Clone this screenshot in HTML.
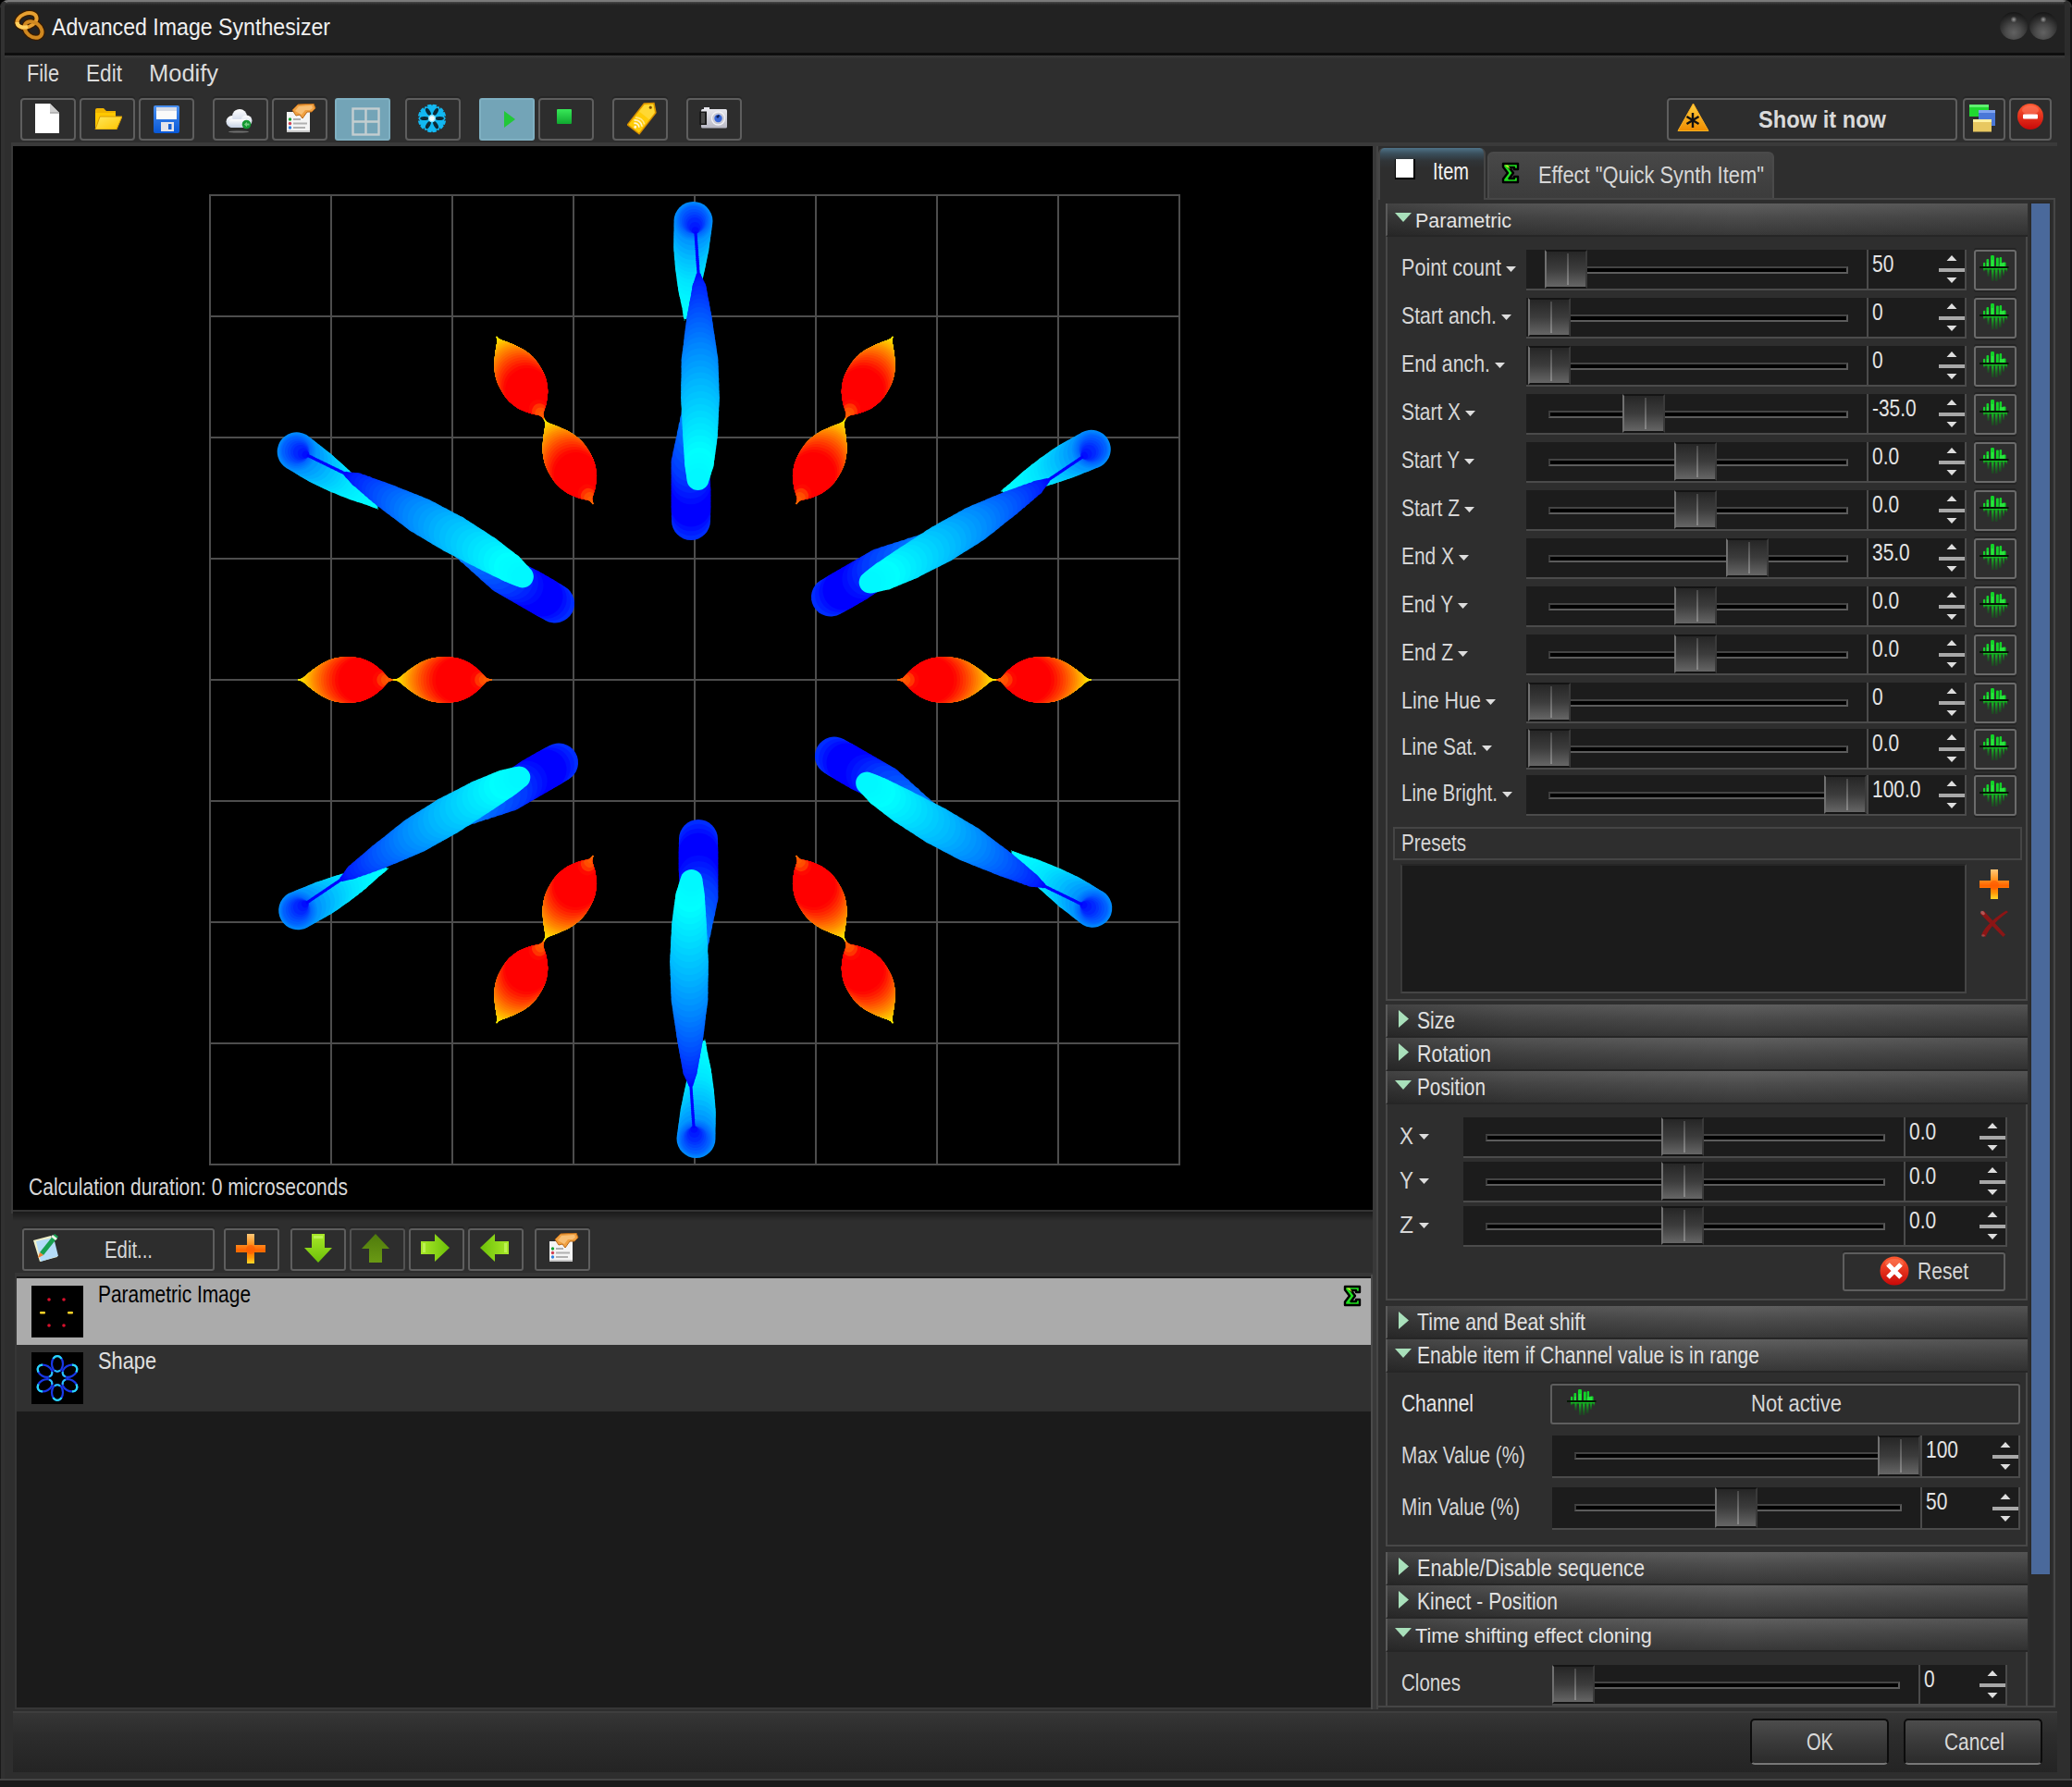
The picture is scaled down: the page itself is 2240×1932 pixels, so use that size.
<!DOCTYPE html>
<html><head><meta charset="utf-8"><title>Advanced Image Synthesizer</title>
<style>
*{box-sizing:border-box;margin:0;padding:0}
html,body{width:2240px;height:1932px;overflow:hidden;background:#000}
body{position:relative;font-family:"Liberation Sans",sans-serif}
div,span.t,svg{position:absolute}
span.t{white-space:nowrap;line-height:1;transform-origin:0 0;display:block}
.tb{border:2px solid #5e5e5e;border-radius:4px;background:#2d2d2d;box-shadow:0 -2px 0 #262626}
.tbh{border:2px solid #7fb0c2;border-radius:3px;background:#73a4b7}
.hd{background:linear-gradient(to right,rgba(0,0,0,.3),rgba(0,0,0,.12) 20%,rgba(0,0,0,0) 55%,rgba(0,0,0,.12)),linear-gradient(#5f5f5f,#4b4b4b 45%,#383838);border-left:2px solid #5a5a5a;border-bottom:2px solid #262626}
.sl{background:#1c1c1c;border-bottom:2px solid #4b4b4b}
.th{background:linear-gradient(#262626,#3c3c3c 50%,#666);border-left:2px solid #707070;border-top:2px solid #141414;border-bottom:2px solid #141414;border-right:2px solid #3a3a3a}
.th:after{content:"";position:absolute;left:22px;top:2px;bottom:2px;width:2px;background:linear-gradient(#4a4a4a,#8a8a8a)}
.gr{background:#000;border-top:2px solid #444;border-bottom:2px solid #5c5c5c;border-right:2px solid #5a5a5a;border-left:2px solid #3a3a3a}
.vb{background:#1c1c1c;border-left:2px solid #4b4b4b;border-right:2px solid #4b4b4b;border-bottom:2px solid #4b4b4b}
.cb{border:2px solid #6b6b6b;border-radius:3px;background:#2e2e2e;box-shadow:0 -2px 0 #242424,0 2px 0 #242424}
.btn{border:2px solid #5e5e5e;border-radius:3px;background:#2d2d2d;box-shadow:0 -2px 0 #262626}
</style></head><body>
<div style="left:0px;top:0px;width:2240px;height:1932px;background:#000"></div>
<div style="left:0px;top:0px;width:2240px;height:1932px;background:#313131;border-radius:8px 8px 0 0"></div>
<div style="left:1px;top:0px;width:2237px;height:60px;background:linear-gradient(#484848,#262626 3px,#222 5px);border-radius:8px 8px 0 0;border-top:2px solid #7a7a7a;border-left:4px solid #323232;border-right:6px solid #2c2c2c"></div>
<div style="left:5px;top:57px;width:2227px;height:3px;background:#0e0e0e"></div>
<div style="left:5px;top:60px;width:2233px;height:1864px;background:#2e2e2e"></div>
<div style="left:5px;top:60px;width:2227px;height:4px;background:linear-gradient(#3a3a3a,#2e2e2e)"></div>
<div style="left:0px;top:8px;width:1px;height:1924px;background:#1a1a1a"></div>
<div style="left:2238px;top:8px;width:2px;height:1924px;background:#171717"></div>
<div style="left:0px;top:1923px;width:2240px;height:2px;background:#444"></div>
<div style="left:0px;top:1925px;width:2240px;height:7px;background:#1a1a1a"></div>
<span class="t" style="left:56.0px;top:17.0px;font-size:25.44px;color:#f0f0f0;transform:scaleX(0.9098);">Advanced Image Synthesizer</span>
<div style="left:2162px;top:13px;width:30px;height:30px;border-radius:50%;background:radial-gradient(circle at 50% 27%,#9a9a9a 0,rgba(110,110,110,0) 13%),radial-gradient(circle at 50% 74%,#626262 0,#4c4c4c 30%,#2c2c2c 60%,#181818 80%,#222 100%)"></div>
<div style="left:2194px;top:13px;width:30px;height:30px;border-radius:50%;background:radial-gradient(circle at 50% 27%,#9a9a9a 0,rgba(110,110,110,0) 13%),radial-gradient(circle at 50% 74%,#626262 0,#4c4c4c 30%,#2c2c2c 60%,#181818 80%,#222 100%)"></div>
<span class="t" style="left:29.0px;top:66.5px;font-size:25.44px;color:#dcdcdc;transform:scaleX(0.8539);">File</span>
<span class="t" style="left:93.0px;top:66.5px;font-size:25.44px;color:#dcdcdc;transform:scaleX(0.8898);">Edit</span>
<span class="t" style="left:161.0px;top:66.5px;font-size:25.44px;color:#dcdcdc;transform:scaleX(1.0011);">Modify</span>
<div class="tb" style="left:22px;top:106px;width:60px;height:46px;"></div>
<div class="tb" style="left:86px;top:106px;width:60px;height:46px;"></div>
<div class="tb" style="left:150px;top:106px;width:60px;height:46px;"></div>
<div class="tb" style="left:230px;top:106px;width:60px;height:46px;"></div>
<div class="tb" style="left:294px;top:106px;width:60px;height:46px;"></div>
<div class="tbh" style="left:362px;top:106px;width:60px;height:46px;"></div>
<div class="tb" style="left:438px;top:106px;width:60px;height:46px;"></div>
<div class="tbh" style="left:518px;top:106px;width:60px;height:46px;"></div>
<div class="tb" style="left:582px;top:106px;width:60px;height:46px;"></div>
<div class="tb" style="left:662px;top:106px;width:60px;height:46px;"></div>
<div class="tb" style="left:742px;top:106px;width:60px;height:46px;"></div>
<div class="tb" style="left:1802px;top:106px;width:314px;height:46px;"></div>
<div class="tb" style="left:2122px;top:106px;width:46px;height:46px;"></div>
<div class="tb" style="left:2172px;top:106px;width:46px;height:46px;"></div>
<span class="t" style="left:1901.0px;top:116.5px;font-size:25.44px;color:#dadada;transform:scaleX(0.9302);font-weight:bold;">Show it now</span>
<div style="left:12px;top:154px;width:2212px;height:4px;background:#3a3a3a"></div>
<div style="left:12px;top:154px;width:1476px;height:1158px;background:#3a3a3a"></div>
<div style="left:14px;top:158px;width:1472px;height:1150px;background:#000"></div>
<div style="left:14px;top:1308px;width:1472px;height:2px;background:#343434"></div>
<div style="left:14px;top:1310px;width:1472px;height:10px;background:linear-gradient(#1a1a1a,#2e2e2e)"></div>
<span class="t" style="left:31.0px;top:1271.0px;font-size:25.44px;color:#d8d8d8;transform:scaleX(0.8272);">Calculation duration: 0 microseconds</span>
<svg width="1472" height="1150" viewBox="14 158 1472 1150" style="left:14px;top:158px"><g fill="#4d4d4d"><rect x="226" y="210" width="2" height="1050"/><rect x="226" y="210" width="1050" height="2"/><rect x="357" y="210" width="2" height="1050"/><rect x="226" y="341" width="1050" height="2"/><rect x="488" y="210" width="2" height="1050"/><rect x="226" y="472" width="1050" height="2"/><rect x="619" y="210" width="2" height="1050"/><rect x="226" y="603" width="1050" height="2"/><rect x="750" y="210" width="2" height="1050"/><rect x="226" y="734" width="1050" height="2"/><rect x="881" y="210" width="2" height="1050"/><rect x="226" y="865" width="1050" height="2"/><rect x="1012" y="210" width="2" height="1050"/><rect x="226" y="996" width="1050" height="2"/><rect x="1143" y="210" width="2" height="1050"/><rect x="226" y="1127" width="1050" height="2"/><rect x="1274" y="210" width="2" height="1050"/><rect x="226" y="1258" width="1050" height="2"/></g><defs><g id="arm"><circle cx="747.0" cy="563.0" r="21.0" fill="rgb(0,45,255)"/><circle cx="747.0" cy="558.0" r="21.2" fill="rgb(0,30,255)"/><circle cx="747.0" cy="553.0" r="21.3" fill="rgb(0,15,255)"/><circle cx="747.0" cy="548.0" r="21.5" fill="rgb(0,0,255)"/><circle cx="747.0" cy="542.0" r="21.5" fill="rgb(0,0,255)"/><circle cx="747.0" cy="536.0" r="21.5" fill="rgb(0,0,255)"/><circle cx="747.0" cy="530.0" r="21.5" fill="rgb(0,0,255)"/><circle cx="746.8" cy="524.0" r="21.3" fill="rgb(0,12,255)"/><circle cx="746.6" cy="518.0" r="21.1" fill="rgb(0,24,255)"/><circle cx="746.4" cy="512.0" r="20.9" fill="rgb(0,36,255)"/><circle cx="746.2" cy="506.0" r="20.7" fill="rgb(0,48,255)"/><circle cx="746.0" cy="500.0" r="20.5" fill="rgb(0,60,255)"/><circle cx="746.5" cy="492.5" r="19.4" fill="rgb(0,70,255)"/><circle cx="747.0" cy="485.0" r="18.4" fill="rgb(0,80,255)"/><circle cx="747.5" cy="477.5" r="17.3" fill="rgb(0,90,255)"/><circle cx="748.0" cy="470.0" r="16.2" fill="rgb(0,100,255)"/><circle cx="748.5" cy="462.5" r="15.2" fill="rgb(0,110,255)"/><circle cx="749.0" cy="455.0" r="14.1" fill="rgb(0,120,255)"/><circle cx="749.5" cy="447.5" r="13.1" fill="rgb(0,130,255)"/><circle cx="750.0" cy="440.0" r="12.0" fill="rgb(0,140,255)"/><circle cx="750.3" cy="431.7" r="10.8" fill="rgb(0,153,255)"/><circle cx="750.7" cy="423.3" r="9.7" fill="rgb(0,167,255)"/><circle cx="751.0" cy="415.0" r="8.5" fill="rgb(0,180,255)"/><circle cx="751.3" cy="406.7" r="7.3" fill="rgb(0,193,255)"/><circle cx="751.7" cy="398.3" r="6.2" fill="rgb(0,207,255)"/><circle cx="752.0" cy="390.0" r="5.0" fill="rgb(0,220,255)"/><circle cx="751.2" cy="383.0" r="4.2" fill="rgb(0,226,255)"/><circle cx="750.5" cy="376.0" r="3.5" fill="rgb(0,232,255)"/><circle cx="749.8" cy="369.0" r="2.8" fill="rgb(0,239,255)"/><circle cx="749.0" cy="362.0" r="2.0" fill="rgb(0,245,255)"/><circle cx="746.0" cy="356.7" r="1.5" fill="rgb(0,248,255)"/><circle cx="743.0" cy="351.3" r="1.1" fill="rgb(0,252,255)"/><circle cx="740.0" cy="346.0" r="0.6" fill="rgb(0,255,255)"/><circle cx="740.7" cy="343.6" r="1.7" fill="rgb(0,254,255)"/><circle cx="741.4" cy="341.2" r="2.8" fill="rgb(0,254,255)"/><circle cx="742.1" cy="338.8" r="3.8" fill="rgb(0,253,255)"/><circle cx="742.8" cy="336.4" r="4.9" fill="rgb(0,253,255)"/><circle cx="743.5" cy="334.0" r="6.0" fill="rgb(0,252,255)"/><circle cx="743.8" cy="329.6" r="7.2" fill="rgb(0,250,255)"/><circle cx="744.1" cy="325.2" r="8.4" fill="rgb(0,249,255)"/><circle cx="744.4" cy="320.8" r="9.6" fill="rgb(0,247,255)"/><circle cx="744.7" cy="316.4" r="10.8" fill="rgb(0,246,255)"/><circle cx="745.0" cy="312.0" r="12.0" fill="rgb(0,244,255)"/><circle cx="745.2" cy="306.5" r="13.0" fill="rgb(0,240,255)"/><circle cx="745.5" cy="301.0" r="14.0" fill="rgb(0,236,255)"/><circle cx="745.8" cy="295.5" r="15.0" fill="rgb(0,232,255)"/><circle cx="746.0" cy="290.0" r="16.0" fill="rgb(0,228,255)"/><circle cx="746.3" cy="285.4" r="16.7" fill="rgb(0,221,255)"/><circle cx="746.6" cy="280.8" r="17.3" fill="rgb(0,215,255)"/><circle cx="746.8" cy="276.2" r="18.0" fill="rgb(0,208,255)"/><circle cx="747.1" cy="271.6" r="18.6" fill="rgb(0,202,255)"/><circle cx="747.4" cy="267.0" r="19.3" fill="rgb(0,195,255)"/><circle cx="747.8" cy="261.4" r="19.6" fill="rgb(0,184,255)"/><circle cx="748.2" cy="255.8" r="20.0" fill="rgb(0,173,255)"/><circle cx="748.7" cy="250.2" r="20.3" fill="rgb(0,162,255)"/><circle cx="749.1" cy="244.6" r="20.7" fill="rgb(0,151,255)"/><circle cx="749.5" cy="239.0" r="21.0" fill="rgb(0,140,255)"/><circle cx="749.6" cy="238.8" r="19.5" fill="rgb(0,129,255)"/><circle cx="749.8" cy="238.5" r="18.0" fill="rgb(0,118,255)"/><circle cx="749.9" cy="238.2" r="16.5" fill="rgb(0,106,255)"/><circle cx="750.0" cy="238.0" r="15.0" fill="rgb(0,95,255)"/><circle cx="750.2" cy="239.2" r="13.2" fill="rgb(0,81,255)"/><circle cx="750.5" cy="240.5" r="11.5" fill="rgb(0,68,255)"/><circle cx="750.8" cy="241.8" r="9.8" fill="rgb(0,54,255)"/><circle cx="751.0" cy="243.0" r="8.0" fill="rgb(0,40,255)"/><circle cx="751.3" cy="246.0" r="5.9" fill="rgb(0,27,255)"/><circle cx="751.7" cy="249.0" r="3.8" fill="rgb(0,13,255)"/><circle cx="752.0" cy="252.0" r="1.7" fill="rgb(0,0,255)"/><circle cx="752.1" cy="254.0" r="1.7" fill="rgb(0,0,255)"/><circle cx="752.3" cy="255.9" r="1.7" fill="rgb(0,0,255)"/><circle cx="752.4" cy="257.9" r="1.7" fill="rgb(0,0,255)"/><circle cx="752.5" cy="259.8" r="1.7" fill="rgb(0,0,255)"/><circle cx="752.7" cy="261.8" r="1.7" fill="rgb(0,0,255)"/><circle cx="752.8" cy="263.7" r="1.7" fill="rgb(0,0,255)"/><circle cx="753.0" cy="265.7" r="1.7" fill="rgb(0,0,255)"/><circle cx="753.1" cy="267.6" r="1.7" fill="rgb(0,0,255)"/><circle cx="753.2" cy="269.6" r="1.7" fill="rgb(0,0,255)"/><circle cx="753.4" cy="271.5" r="1.7" fill="rgb(0,0,255)"/><circle cx="753.5" cy="273.5" r="1.7" fill="rgb(0,0,255)"/><circle cx="753.6" cy="275.5" r="1.7" fill="rgb(0,0,255)"/><circle cx="753.8" cy="277.4" r="1.7" fill="rgb(0,0,255)"/><circle cx="753.9" cy="279.4" r="1.7" fill="rgb(0,0,255)"/><circle cx="754.0" cy="281.3" r="1.7" fill="rgb(0,0,255)"/><circle cx="754.2" cy="283.3" r="1.7" fill="rgb(0,0,255)"/><circle cx="754.3" cy="285.2" r="1.7" fill="rgb(0,0,255)"/><circle cx="754.5" cy="287.2" r="1.7" fill="rgb(0,0,255)"/><circle cx="754.6" cy="289.1" r="1.7" fill="rgb(0,0,255)"/><circle cx="754.7" cy="291.1" r="1.7" fill="rgb(0,0,255)"/><circle cx="754.9" cy="293.0" r="1.7" fill="rgb(0,0,255)"/><circle cx="755.0" cy="295.0" r="1.7" fill="rgb(0,0,255)"/><circle cx="755.2" cy="297.8" r="2.8" fill="rgb(0,6,255)"/><circle cx="755.3" cy="300.7" r="3.8" fill="rgb(0,11,255)"/><circle cx="755.5" cy="303.5" r="4.8" fill="rgb(0,17,255)"/><circle cx="755.7" cy="306.3" r="5.9" fill="rgb(0,23,255)"/><circle cx="755.8" cy="309.2" r="7.0" fill="rgb(0,28,255)"/><circle cx="756.0" cy="312.0" r="8.0" fill="rgb(0,34,255)"/><circle cx="756.0" cy="317.7" r="9.0" fill="rgb(0,42,255)"/><circle cx="756.0" cy="323.3" r="10.0" fill="rgb(0,49,255)"/><circle cx="756.0" cy="329.0" r="11.0" fill="rgb(0,57,255)"/><circle cx="756.0" cy="334.7" r="12.0" fill="rgb(0,65,255)"/><circle cx="756.0" cy="340.3" r="13.0" fill="rgb(0,72,255)"/><circle cx="756.0" cy="346.0" r="14.0" fill="rgb(0,80,255)"/><circle cx="756.1" cy="352.3" r="14.9" fill="rgb(0,88,255)"/><circle cx="756.1" cy="358.6" r="15.7" fill="rgb(0,96,255)"/><circle cx="756.2" cy="364.9" r="16.6" fill="rgb(0,104,255)"/><circle cx="756.3" cy="371.1" r="17.4" fill="rgb(0,111,255)"/><circle cx="756.4" cy="377.4" r="18.3" fill="rgb(0,119,255)"/><circle cx="756.4" cy="383.7" r="19.1" fill="rgb(0,127,255)"/><circle cx="756.5" cy="390.0" r="20.0" fill="rgb(0,135,255)"/><circle cx="756.6" cy="396.7" r="20.2" fill="rgb(0,143,255)"/><circle cx="756.7" cy="403.3" r="20.3" fill="rgb(0,151,255)"/><circle cx="756.8" cy="410.0" r="20.5" fill="rgb(0,158,255)"/><circle cx="756.8" cy="416.7" r="20.7" fill="rgb(0,166,255)"/><circle cx="756.9" cy="423.3" r="20.8" fill="rgb(0,174,255)"/><circle cx="757.0" cy="430.0" r="21.0" fill="rgb(0,182,255)"/><circle cx="757.0" cy="436.7" r="20.7" fill="rgb(0,189,255)"/><circle cx="757.0" cy="443.3" r="20.3" fill="rgb(0,196,255)"/><circle cx="757.0" cy="450.0" r="20.0" fill="rgb(0,203,255)"/><circle cx="757.0" cy="456.7" r="19.7" fill="rgb(0,210,255)"/><circle cx="757.0" cy="463.3" r="19.3" fill="rgb(0,217,255)"/><circle cx="757.0" cy="470.0" r="19.0" fill="rgb(0,224,255)"/><circle cx="756.8" cy="476.0" r="18.4" fill="rgb(0,230,255)"/><circle cx="756.6" cy="482.0" r="17.8" fill="rgb(0,236,255)"/><circle cx="756.4" cy="488.0" r="17.2" fill="rgb(0,243,255)"/><circle cx="756.2" cy="494.0" r="16.6" fill="rgb(0,249,255)"/><circle cx="756.0" cy="500.0" r="16.0" fill="rgb(0,255,255)"/><circle cx="755.6" cy="504.5" r="15.0" fill="rgb(0,253,255)"/><circle cx="755.2" cy="509.0" r="14.0" fill="rgb(0,252,255)"/><circle cx="754.9" cy="513.5" r="13.0" fill="rgb(0,250,255)"/><circle cx="754.5" cy="518.0" r="12.0" fill="rgb(0,248,255)"/></g><clipPath id="lc"><path d="M1076.0 734.3L1079.1 734.1L1082.2 732.8L1089.1 725.2L1094.7 720.5L1100.4 716.5L1106.2 713.8L1111.8 711.8L1117.6 710.7L1123.2 710.2L1129.0 710.2L1134.6 710.7L1140.5 711.8L1145.9 713.6L1151.9 716.2L1157.2 719.4L1163.4 723.8L1168.7 728.0L1174.3 732.7L1176.9 734.1L1180.0 734.3L1180.0 735.7L1176.9 735.9L1174.3 737.3L1168.7 742.0L1163.4 746.2L1157.2 750.6L1151.9 753.8L1145.9 756.4L1140.5 758.2L1134.6 759.3L1129.0 759.8L1123.2 759.8L1117.6 759.3L1111.8 758.2L1106.2 756.2L1100.4 753.5L1094.7 749.5L1089.1 744.8L1082.2 737.2L1079.1 735.9L1076.0 735.7ZM970.0 734.3L973.2 734.1L976.4 732.8L983.4 725.2L989.1 720.5L994.9 716.5L1000.7 713.8L1006.5 711.8L1012.4 710.7L1018.1 710.2L1024.1 710.2L1029.7 710.7L1035.7 711.8L1041.2 713.6L1047.4 716.2L1052.8 719.4L1059.0 723.8L1064.4 728.0L1070.2 732.7L1072.8 734.1L1076.0 734.3L1076.0 735.7L1072.8 735.9L1070.2 737.3L1064.4 742.0L1059.0 746.2L1052.8 750.6L1047.4 753.8L1041.2 756.4L1035.7 758.2L1029.7 759.3L1024.1 759.8L1018.1 759.8L1012.4 759.3L1006.5 758.2L1000.7 756.2L994.9 753.5L989.1 749.5L983.4 744.8L976.4 737.2L973.2 735.9L970.0 735.7Z"/></clipPath><g id="leaf" clip-path="url(#lc)"><circle cx="1180.0" cy="735" r="1.2" fill="rgb(255,245,0)"/><circle cx="1177.4" cy="735" r="2.1" fill="rgb(255,241,0)"/><circle cx="1174.8" cy="735" r="4.2" fill="rgb(255,238,0)"/><circle cx="1172.2" cy="735" r="6.3" fill="rgb(255,234,0)"/><circle cx="1169.6" cy="735" r="8.3" fill="rgb(255,230,0)"/><circle cx="1167.0" cy="735" r="10.3" fill="rgb(255,226,0)"/><circle cx="1164.4" cy="735" r="12.3" fill="rgb(255,222,0)"/><circle cx="1161.8" cy="735" r="14.1" fill="rgb(255,219,0)"/><circle cx="1159.2" cy="735" r="15.9" fill="rgb(255,215,0)"/><circle cx="1156.6" cy="735" r="17.5" fill="rgb(255,207,0)"/><circle cx="1154.0" cy="735" r="19.1" fill="rgb(255,199,0)"/><circle cx="1151.4" cy="735" r="20.5" fill="rgb(255,191,0)"/><circle cx="1148.8" cy="735" r="21.8" fill="rgb(255,183,0)"/><circle cx="1146.2" cy="735" r="23.0" fill="rgb(255,175,0)"/><circle cx="1143.6" cy="735" r="24.1" fill="rgb(255,165,0)"/><circle cx="1141.0" cy="735" r="24.9" fill="rgb(255,152,0)"/><circle cx="1138.4" cy="735" r="25.7" fill="rgb(255,140,0)"/><circle cx="1135.8" cy="735" r="26.3" fill="rgb(255,128,0)"/><circle cx="1133.2" cy="735" r="26.7" fill="rgb(255,115,0)"/><circle cx="1130.6" cy="735" r="26.9" fill="rgb(255,101,0)"/><circle cx="1128.0" cy="735" r="27.0" fill="rgb(255,86,0)"/><circle cx="1125.4" cy="735" r="26.9" fill="rgb(255,71,0)"/><circle cx="1122.8" cy="735" r="26.7" fill="rgb(255,56,0)"/><circle cx="1120.2" cy="735" r="26.3" fill="rgb(255,41,0)"/><circle cx="1117.6" cy="735" r="25.7" fill="rgb(255,25,0)"/><circle cx="1115.0" cy="735" r="24.9" fill="rgb(255,9,0)"/><circle cx="1112.4" cy="735" r="24.1" fill="rgb(255,0,0)"/><circle cx="1109.8" cy="735" r="23.0" fill="rgb(255,0,0)"/><circle cx="1107.2" cy="735" r="21.8" fill="rgb(255,0,0)"/><circle cx="1104.6" cy="735" r="20.5" fill="rgb(255,0,0)"/><circle cx="1102.0" cy="735" r="19.1" fill="rgb(255,0,0)"/><circle cx="1099.4" cy="735" r="17.5" fill="rgb(255,0,0)"/><circle cx="1096.8" cy="735" r="15.9" fill="rgb(255,0,0)"/><circle cx="1094.2" cy="735" r="14.1" fill="rgb(255,0,0)"/><circle cx="1091.6" cy="735" r="12.3" fill="rgb(255,0,0)"/><circle cx="1089.0" cy="735" r="10.3" fill="rgb(255,9,0)"/><circle cx="1086.4" cy="735" r="8.3" fill="rgb(255,52,0)"/><circle cx="1083.8" cy="735" r="6.3" fill="rgb(255,78,0)"/><circle cx="1081.2" cy="735" r="4.2" fill="rgb(255,90,0)"/><circle cx="1078.6" cy="735" r="2.1" fill="rgb(255,102,0)"/><circle cx="1076.0" cy="735" r="1.2" fill="rgb(255,115,0)"/><circle cx="1076.0" cy="735" r="1.2" fill="rgb(255,245,0)"/><circle cx="1073.3" cy="735" r="2.1" fill="rgb(255,241,0)"/><circle cx="1070.7" cy="735" r="4.2" fill="rgb(255,238,0)"/><circle cx="1068.0" cy="735" r="6.3" fill="rgb(255,234,0)"/><circle cx="1065.4" cy="735" r="8.3" fill="rgb(255,230,0)"/><circle cx="1062.8" cy="735" r="10.3" fill="rgb(255,226,0)"/><circle cx="1060.1" cy="735" r="12.3" fill="rgb(255,222,0)"/><circle cx="1057.5" cy="735" r="14.1" fill="rgb(255,219,0)"/><circle cx="1054.8" cy="735" r="15.9" fill="rgb(255,215,0)"/><circle cx="1052.2" cy="735" r="17.5" fill="rgb(255,207,0)"/><circle cx="1049.5" cy="735" r="19.1" fill="rgb(255,199,0)"/><circle cx="1046.8" cy="735" r="20.5" fill="rgb(255,191,0)"/><circle cx="1044.2" cy="735" r="21.8" fill="rgb(255,183,0)"/><circle cx="1041.5" cy="735" r="23.0" fill="rgb(255,175,0)"/><circle cx="1038.9" cy="735" r="24.1" fill="rgb(255,165,0)"/><circle cx="1036.2" cy="735" r="24.9" fill="rgb(255,152,0)"/><circle cx="1033.6" cy="735" r="25.7" fill="rgb(255,140,0)"/><circle cx="1031.0" cy="735" r="26.3" fill="rgb(255,128,0)"/><circle cx="1028.3" cy="735" r="26.7" fill="rgb(255,115,0)"/><circle cx="1025.7" cy="735" r="26.9" fill="rgb(255,101,0)"/><circle cx="1023.0" cy="735" r="27.0" fill="rgb(255,86,0)"/><circle cx="1020.4" cy="735" r="26.9" fill="rgb(255,71,0)"/><circle cx="1017.7" cy="735" r="26.7" fill="rgb(255,56,0)"/><circle cx="1015.0" cy="735" r="26.3" fill="rgb(255,41,0)"/><circle cx="1012.4" cy="735" r="25.7" fill="rgb(255,25,0)"/><circle cx="1009.8" cy="735" r="24.9" fill="rgb(255,9,0)"/><circle cx="1007.1" cy="735" r="24.1" fill="rgb(255,0,0)"/><circle cx="1004.5" cy="735" r="23.0" fill="rgb(255,0,0)"/><circle cx="1001.8" cy="735" r="21.8" fill="rgb(255,0,0)"/><circle cx="999.1" cy="735" r="20.5" fill="rgb(255,0,0)"/><circle cx="996.5" cy="735" r="19.1" fill="rgb(255,0,0)"/><circle cx="993.9" cy="735" r="17.5" fill="rgb(255,0,0)"/><circle cx="991.2" cy="735" r="15.9" fill="rgb(255,0,0)"/><circle cx="988.5" cy="735" r="14.1" fill="rgb(255,0,0)"/><circle cx="985.9" cy="735" r="12.3" fill="rgb(255,0,0)"/><circle cx="983.2" cy="735" r="10.3" fill="rgb(255,9,0)"/><circle cx="980.6" cy="735" r="8.3" fill="rgb(255,52,0)"/><circle cx="978.0" cy="735" r="6.3" fill="rgb(255,78,0)"/><circle cx="975.3" cy="735" r="4.2" fill="rgb(255,90,0)"/><circle cx="972.6" cy="735" r="2.1" fill="rgb(255,102,0)"/><circle cx="970.0" cy="735" r="1.2" fill="rgb(255,115,0)"/></g></defs><use href="#leaf" transform="rotate(0 751 735)"/><use href="#leaf" transform="rotate(60 751 735)"/><use href="#leaf" transform="rotate(120 751 735)"/><use href="#leaf" transform="rotate(180 751 735)"/><use href="#leaf" transform="rotate(240 751 735)"/><use href="#leaf" transform="rotate(300 751 735)"/><use href="#arm" transform="rotate(0 751 735)"/><use href="#arm" transform="rotate(60 751 735)"/><use href="#arm" transform="rotate(120 751 735)"/><use href="#arm" transform="rotate(180 751 735)"/><use href="#arm" transform="rotate(240 751 735)"/><use href="#arm" transform="rotate(300 751 735)"/></svg>
<div class="btn" style="left:24px;top:1328px;width:208px;height:46px;"></div>
<div class="btn" style="left:242px;top:1328px;width:60px;height:46px;"></div>
<div class="btn" style="left:314px;top:1328px;width:60px;height:46px;"></div>
<div class="btn" style="left:378px;top:1328px;width:60px;height:46px;opacity:.75"></div>
<div class="btn" style="left:442px;top:1328px;width:60px;height:46px;"></div>
<div class="btn" style="left:506px;top:1328px;width:60px;height:46px;"></div>
<div class="btn" style="left:578px;top:1328px;width:60px;height:46px;"></div>
<span class="t" style="left:113.0px;top:1338.5px;font-size:25.44px;color:#d6d6d6;transform:scaleX(0.7996);">Edit...</span>
<div style="left:16px;top:1376px;width:1468px;height:472px;background:#363636"></div>
<div style="left:1482px;top:1378px;width:2px;height:470px;background:#4a4a4a"></div>
<div style="left:18px;top:1380px;width:1464px;height:466px;background:#1b1b1b"></div>
<div style="left:18px;top:1382px;width:1464px;height:72px;background:#ababab"></div>
<div style="left:18px;top:1454px;width:1464px;height:72px;background:#303030"></div>
<div style="left:34px;top:1390px;width:56px;height:56px;background:#000"></div>
<div style="left:34px;top:1462px;width:56px;height:56px;background:#000"></div>
<span class="t" style="left:106.0px;top:1386.5px;font-size:25.44px;color:#000;transform:scaleX(0.8220);">Parametric Image</span>
<span class="t" style="left:106.0px;top:1458.5px;font-size:25.44px;color:#e0e0e0;transform:scaleX(0.8565);">Shape</span>
<div style="left:1484px;top:158px;width:6px;height:1690px;background:#393939"></div>
<div style="left:1488px;top:158px;width:2px;height:1690px;background:#444"></div>
<div style="left:14px;top:1850px;width:2210px;height:66px;background:linear-gradient(#363636,#2c2c2c 40%,#242424)"></div>
<div style="left:14px;top:1850px;width:2210px;height:2px;background:#3e3e3e"></div>
<div style="left:1892px;top:1858px;width:150px;height:50px;border-radius:5px;background:linear-gradient(#4c4c4c,#3a3a3a 50%,#2b2b2b);border:2px solid #0c0c0c;border-bottom:2px solid #777;box-shadow:0 0 0 0 #000"></div>
<span class="t" style="left:1953.0px;top:1870.5px;font-size:25.44px;color:#dadada;transform:scaleX(0.7891);">OK</span>
<div style="left:2058px;top:1858px;width:150px;height:50px;border-radius:5px;background:linear-gradient(#4c4c4c,#3a3a3a 50%,#2b2b2b);border:2px solid #0c0c0c;border-bottom:2px solid #777;box-shadow:0 0 0 0 #000"></div>
<span class="t" style="left:2102.0px;top:1870.5px;font-size:25.44px;color:#dadada;transform:scaleX(0.8209);">Cancel</span>
<div style="left:1488px;top:214px;width:734px;height:1632px;border:2px solid #464646;background:#2e2e2e"></div>
<div style="left:1490px;top:160px;width:116px;height:56px;background:linear-gradient(#4f7388,#3a4f5c 6px,#303437 14px,#2e2e2e 22px);border-radius:6px 6px 0 0;border-left:2px solid #464646;border-right:2px solid #464646"></div>
<div style="left:1608px;top:164px;width:310px;height:50px;background:linear-gradient(#484848,#3c3c3c);border-radius:6px 6px 0 0;border:2px solid #4a4a4a;border-bottom:none"></div>
<div style="left:1508px;top:172px;width:22px;height:22px;background:#fff;border:2px solid #000;border-top:none;border-left-width:1px"></div>
<span class="t" style="left:1549.0px;top:171.9px;font-size:26.16px;color:#f2f2f2;transform:scaleX(0.7665);">Item</span>
<span class="t" style="left:1663.0px;top:175.9px;font-size:26.16px;color:#d6d6d6;transform:scaleX(0.8372);">Effect "Quick Synth Item"</span>
<div style="left:2194px;top:218px;width:24px;height:1626px;background:#2a2a2a"></div>
<div style="left:2196px;top:220px;width:20px;height:1482px;background:#4a699b"></div>
<div class="hd" style="left:1498px;top:220px;width:694px;height:36px;"></div>
<svg style="left:1508px;top:230px" width="18" height="10"><path d="M0 0H18L9 10Z" fill="#a9e0bb"/></svg>
<span class="t" style="left:1530.0px;top:226.8px;font-size:22.67px;color:#e4e4e4;transform:scaleX(0.9487);">Parametric</span>
<div style="left:1498px;top:256px;width:694px;height:826px;border-left:2px solid #484848;border-right:2px solid #484848;border-bottom:2px solid #484848"></div>
<span class="t" style="left:1515.0px;top:276.5px;font-size:25.44px;color:#d6d6d6;transform:scaleX(0.8486);">Point count</span>
<svg style="left:1628px;top:288px" width="11" height="6"><path d="M0 0H11L5.5 6Z" fill="#ddd"/></svg>
<div class="sl" style="left:1650px;top:270px;width:368px;height:44px;"></div>
<div class="gr" style="left:1674px;top:288px;width:324px;height:8px;"></div>
<div class="th" style="left:1670px;top:270px;width:46px;height:42px;"></div>
<div class="vb" style="left:2018px;top:270px;width:108px;height:44px;"></div>
<span class="t" style="left:2024.0px;top:271.9px;font-size:26.16px;color:#e4e4e4;transform:scaleX(1.0000);transform:scaleX(.8);">50</span>
<svg style="left:2096px;top:270px" width="28" height="42"><path d="M8.5 12h11l-5.5 -6zM8.5 30h11l-5.5 6z" fill="#ddd"/><rect x="0" y="20" width="28" height="4" fill="#a8a8a8"/></svg>
<div class="cb" style="left:2134px;top:270px;width:46px;height:44px;"></div>
<span class="t" style="left:1515.0px;top:328.5px;font-size:25.44px;color:#d6d6d6;transform:scaleX(0.8373);">Start anch.</span>
<svg style="left:1623px;top:340px" width="11" height="6"><path d="M0 0H11L5.5 6Z" fill="#ddd"/></svg>
<div class="sl" style="left:1650px;top:322px;width:368px;height:44px;"></div>
<div class="gr" style="left:1674px;top:340px;width:324px;height:8px;"></div>
<div class="th" style="left:1652px;top:322px;width:46px;height:42px;"></div>
<div class="vb" style="left:2018px;top:322px;width:108px;height:44px;"></div>
<span class="t" style="left:2024.0px;top:323.9px;font-size:26.16px;color:#e4e4e4;transform:scaleX(1.0000);transform:scaleX(.8);">0</span>
<svg style="left:2096px;top:322px" width="28" height="42"><path d="M8.5 12h11l-5.5 -6zM8.5 30h11l-5.5 6z" fill="#ddd"/><rect x="0" y="20" width="28" height="4" fill="#a8a8a8"/></svg>
<div class="cb" style="left:2134px;top:322px;width:46px;height:44px;"></div>
<span class="t" style="left:1515.0px;top:380.5px;font-size:25.44px;color:#d6d6d6;transform:scaleX(0.8381);">End anch.</span>
<svg style="left:1616px;top:392px" width="11" height="6"><path d="M0 0H11L5.5 6Z" fill="#ddd"/></svg>
<div class="sl" style="left:1650px;top:374px;width:368px;height:44px;"></div>
<div class="gr" style="left:1674px;top:392px;width:324px;height:8px;"></div>
<div class="th" style="left:1652px;top:374px;width:46px;height:42px;"></div>
<div class="vb" style="left:2018px;top:374px;width:108px;height:44px;"></div>
<span class="t" style="left:2024.0px;top:375.9px;font-size:26.16px;color:#e4e4e4;transform:scaleX(1.0000);transform:scaleX(.8);">0</span>
<svg style="left:2096px;top:374px" width="28" height="42"><path d="M8.5 12h11l-5.5 -6zM8.5 30h11l-5.5 6z" fill="#ddd"/><rect x="0" y="20" width="28" height="4" fill="#a8a8a8"/></svg>
<div class="cb" style="left:2134px;top:374px;width:46px;height:44px;"></div>
<span class="t" style="left:1515.0px;top:432.5px;font-size:25.44px;color:#d6d6d6;transform:scaleX(0.8232);">Start X</span>
<svg style="left:1584px;top:444px" width="11" height="6"><path d="M0 0H11L5.5 6Z" fill="#ddd"/></svg>
<div class="sl" style="left:1650px;top:426px;width:368px;height:44px;"></div>
<div class="gr" style="left:1674px;top:444px;width:324px;height:8px;"></div>
<div class="th" style="left:1754px;top:426px;width:46px;height:42px;"></div>
<div class="vb" style="left:2018px;top:426px;width:108px;height:44px;"></div>
<span class="t" style="left:2024.0px;top:427.9px;font-size:26.16px;color:#e4e4e4;transform:scaleX(1.0000);transform:scaleX(.8);">-35.0</span>
<svg style="left:2096px;top:426px" width="28" height="42"><path d="M8.5 12h11l-5.5 -6zM8.5 30h11l-5.5 6z" fill="#ddd"/><rect x="0" y="20" width="28" height="4" fill="#a8a8a8"/></svg>
<div class="cb" style="left:2134px;top:426px;width:46px;height:44px;"></div>
<span class="t" style="left:1515.0px;top:484.5px;font-size:25.44px;color:#d6d6d6;transform:scaleX(0.8151);">Start Y</span>
<svg style="left:1583px;top:496px" width="11" height="6"><path d="M0 0H11L5.5 6Z" fill="#ddd"/></svg>
<div class="sl" style="left:1650px;top:478px;width:368px;height:44px;"></div>
<div class="gr" style="left:1674px;top:496px;width:324px;height:8px;"></div>
<div class="th" style="left:1810px;top:478px;width:46px;height:42px;"></div>
<div class="vb" style="left:2018px;top:478px;width:108px;height:44px;"></div>
<span class="t" style="left:2024.0px;top:479.9px;font-size:26.16px;color:#e4e4e4;transform:scaleX(1.0000);transform:scaleX(.8);">0.0</span>
<svg style="left:2096px;top:478px" width="28" height="42"><path d="M8.5 12h11l-5.5 -6zM8.5 30h11l-5.5 6z" fill="#ddd"/><rect x="0" y="20" width="28" height="4" fill="#a8a8a8"/></svg>
<div class="cb" style="left:2134px;top:478px;width:46px;height:44px;"></div>
<span class="t" style="left:1515.0px;top:536.5px;font-size:25.44px;color:#d6d6d6;transform:scaleX(0.8255);">Start Z</span>
<svg style="left:1583px;top:548px" width="11" height="6"><path d="M0 0H11L5.5 6Z" fill="#ddd"/></svg>
<div class="sl" style="left:1650px;top:530px;width:368px;height:44px;"></div>
<div class="gr" style="left:1674px;top:548px;width:324px;height:8px;"></div>
<div class="th" style="left:1810px;top:530px;width:46px;height:42px;"></div>
<div class="vb" style="left:2018px;top:530px;width:108px;height:44px;"></div>
<span class="t" style="left:2024.0px;top:531.9px;font-size:26.16px;color:#e4e4e4;transform:scaleX(1.0000);transform:scaleX(.8);">0.0</span>
<svg style="left:2096px;top:530px" width="28" height="42"><path d="M8.5 12h11l-5.5 -6zM8.5 30h11l-5.5 6z" fill="#ddd"/><rect x="0" y="20" width="28" height="4" fill="#a8a8a8"/></svg>
<div class="cb" style="left:2134px;top:530px;width:46px;height:44px;"></div>
<span class="t" style="left:1515.0px;top:588.5px;font-size:25.44px;color:#d6d6d6;transform:scaleX(0.8226);">End X</span>
<svg style="left:1577px;top:600px" width="11" height="6"><path d="M0 0H11L5.5 6Z" fill="#ddd"/></svg>
<div class="sl" style="left:1650px;top:582px;width:368px;height:44px;"></div>
<div class="gr" style="left:1674px;top:600px;width:324px;height:8px;"></div>
<div class="th" style="left:1866px;top:582px;width:46px;height:42px;"></div>
<div class="vb" style="left:2018px;top:582px;width:108px;height:44px;"></div>
<span class="t" style="left:2024.0px;top:583.9px;font-size:26.16px;color:#e4e4e4;transform:scaleX(1.0000);transform:scaleX(.8);">35.0</span>
<svg style="left:2096px;top:582px" width="28" height="42"><path d="M8.5 12h11l-5.5 -6zM8.5 30h11l-5.5 6z" fill="#ddd"/><rect x="0" y="20" width="28" height="4" fill="#a8a8a8"/></svg>
<div class="cb" style="left:2134px;top:582px;width:46px;height:44px;"></div>
<span class="t" style="left:1515.0px;top:640.5px;font-size:25.44px;color:#d6d6d6;transform:scaleX(0.8136);">End Y</span>
<svg style="left:1576px;top:652px" width="11" height="6"><path d="M0 0H11L5.5 6Z" fill="#ddd"/></svg>
<div class="sl" style="left:1650px;top:634px;width:368px;height:44px;"></div>
<div class="gr" style="left:1674px;top:652px;width:324px;height:8px;"></div>
<div class="th" style="left:1810px;top:634px;width:46px;height:42px;"></div>
<div class="vb" style="left:2018px;top:634px;width:108px;height:44px;"></div>
<span class="t" style="left:2024.0px;top:635.9px;font-size:26.16px;color:#e4e4e4;transform:scaleX(1.0000);transform:scaleX(.8);">0.0</span>
<svg style="left:2096px;top:634px" width="28" height="42"><path d="M8.5 12h11l-5.5 -6zM8.5 30h11l-5.5 6z" fill="#ddd"/><rect x="0" y="20" width="28" height="4" fill="#a8a8a8"/></svg>
<div class="cb" style="left:2134px;top:634px;width:46px;height:44px;"></div>
<span class="t" style="left:1515.0px;top:692.5px;font-size:25.44px;color:#d6d6d6;transform:scaleX(0.8252);">End Z</span>
<svg style="left:1576px;top:704px" width="11" height="6"><path d="M0 0H11L5.5 6Z" fill="#ddd"/></svg>
<div class="sl" style="left:1650px;top:686px;width:368px;height:44px;"></div>
<div class="gr" style="left:1674px;top:704px;width:324px;height:8px;"></div>
<div class="th" style="left:1810px;top:686px;width:46px;height:42px;"></div>
<div class="vb" style="left:2018px;top:686px;width:108px;height:44px;"></div>
<span class="t" style="left:2024.0px;top:687.9px;font-size:26.16px;color:#e4e4e4;transform:scaleX(1.0000);transform:scaleX(.8);">0.0</span>
<svg style="left:2096px;top:686px" width="28" height="42"><path d="M8.5 12h11l-5.5 -6zM8.5 30h11l-5.5 6z" fill="#ddd"/><rect x="0" y="20" width="28" height="4" fill="#a8a8a8"/></svg>
<div class="cb" style="left:2134px;top:686px;width:46px;height:44px;"></div>
<span class="t" style="left:1515.0px;top:744.5px;font-size:25.44px;color:#d6d6d6;transform:scaleX(0.8446);">Line Hue</span>
<svg style="left:1606px;top:756px" width="11" height="6"><path d="M0 0H11L5.5 6Z" fill="#ddd"/></svg>
<div class="sl" style="left:1650px;top:738px;width:368px;height:44px;"></div>
<div class="gr" style="left:1674px;top:756px;width:324px;height:8px;"></div>
<div class="th" style="left:1652px;top:738px;width:46px;height:42px;"></div>
<div class="vb" style="left:2018px;top:738px;width:108px;height:44px;"></div>
<span class="t" style="left:2024.0px;top:739.9px;font-size:26.16px;color:#e4e4e4;transform:scaleX(1.0000);transform:scaleX(.8);">0</span>
<svg style="left:2096px;top:738px" width="28" height="42"><path d="M8.5 12h11l-5.5 -6zM8.5 30h11l-5.5 6z" fill="#ddd"/><rect x="0" y="20" width="28" height="4" fill="#a8a8a8"/></svg>
<div class="cb" style="left:2134px;top:738px;width:46px;height:44px;"></div>
<span class="t" style="left:1515.0px;top:794.5px;font-size:25.44px;color:#d6d6d6;transform:scaleX(0.8167);">Line Sat.</span>
<svg style="left:1602px;top:806px" width="11" height="6"><path d="M0 0H11L5.5 6Z" fill="#ddd"/></svg>
<div class="sl" style="left:1650px;top:788px;width:368px;height:44px;"></div>
<div class="gr" style="left:1674px;top:806px;width:324px;height:8px;"></div>
<div class="th" style="left:1652px;top:788px;width:46px;height:42px;"></div>
<div class="vb" style="left:2018px;top:788px;width:108px;height:44px;"></div>
<span class="t" style="left:2024.0px;top:789.9px;font-size:26.16px;color:#e4e4e4;transform:scaleX(1.0000);transform:scaleX(.8);">0.0</span>
<svg style="left:2096px;top:788px" width="28" height="42"><path d="M8.5 12h11l-5.5 -6zM8.5 30h11l-5.5 6z" fill="#ddd"/><rect x="0" y="20" width="28" height="4" fill="#a8a8a8"/></svg>
<div class="cb" style="left:2134px;top:788px;width:46px;height:44px;"></div>
<span class="t" style="left:1515.0px;top:844.5px;font-size:25.44px;color:#d6d6d6;transform:scaleX(0.8083);">Line Bright.</span>
<svg style="left:1624px;top:856px" width="11" height="6"><path d="M0 0H11L5.5 6Z" fill="#ddd"/></svg>
<div class="sl" style="left:1650px;top:838px;width:368px;height:44px;"></div>
<div class="gr" style="left:1674px;top:856px;width:324px;height:8px;"></div>
<div class="th" style="left:1972px;top:838px;width:46px;height:42px;"></div>
<div class="vb" style="left:2018px;top:838px;width:108px;height:44px;"></div>
<span class="t" style="left:2024.0px;top:839.9px;font-size:26.16px;color:#e4e4e4;transform:scaleX(1.0000);transform:scaleX(.8);">100.0</span>
<svg style="left:2096px;top:838px" width="28" height="42"><path d="M8.5 12h11l-5.5 -6zM8.5 30h11l-5.5 6z" fill="#ddd"/><rect x="0" y="20" width="28" height="4" fill="#a8a8a8"/></svg>
<div class="cb" style="left:2134px;top:838px;width:46px;height:44px;"></div>
<div style="left:1506px;top:894px;width:680px;height:36px;border:2px solid #454545;background:#2e2e2e"></div>
<span class="t" style="left:1515.0px;top:898.5px;font-size:25.44px;color:#d6d6d6;transform:scaleX(0.8118);">Presets</span>
<div style="left:1514px;top:934px;width:612px;height:140px;background:#1b1b1b;border:2px solid #454545;border-top-color:#262626;border-left-color:#3a3a3a"></div>
<div class="hd" style="left:1498px;top:1086px;width:694px;height:36px;"></div>
<svg style="left:1512px;top:1092px" width="11" height="19"><path d="M0 0L11 9.5L0 19Z" fill="#a9e0bb"/></svg>
<span class="t" style="left:1532.0px;top:1090.7px;font-size:25.15px;color:#e0e0e0;transform:scaleX(0.8382);">Size</span>
<div class="hd" style="left:1498px;top:1122px;width:694px;height:36px;"></div>
<svg style="left:1512px;top:1128px" width="11" height="19"><path d="M0 0L11 9.5L0 19Z" fill="#a9e0bb"/></svg>
<span class="t" style="left:1532.0px;top:1126.7px;font-size:25.15px;color:#e0e0e0;transform:scaleX(0.8542);">Rotation</span>
<div class="hd" style="left:1498px;top:1158px;width:694px;height:36px;"></div>
<svg style="left:1508px;top:1168px" width="18" height="10"><path d="M0 0H18L9 10Z" fill="#a9e0bb"/></svg>
<span class="t" style="left:1532.0px;top:1162.7px;font-size:25.15px;color:#e0e0e0;transform:scaleX(0.8272);">Position</span>
<div style="left:1498px;top:1194px;width:694px;height:212px;border-left:2px solid #484848;border-right:2px solid #484848;border-bottom:2px solid #484848"></div>
<span class="t" style="left:1513.0px;top:1215.5px;font-size:25.44px;color:#d6d6d6;transform:scaleX(0.8841);">X</span>
<svg style="left:1534px;top:1226px" width="11" height="6"><path d="M0 0H11L5.5 6Z" fill="#ddd"/></svg>
<div class="sl" style="left:1582px;top:1208px;width:476px;height:44px;"></div>
<div class="gr" style="left:1606px;top:1226px;width:432px;height:8px;"></div>
<div class="th" style="left:1796px;top:1208px;width:46px;height:42px;"></div>
<div class="vb" style="left:2058px;top:1208px;width:112px;height:44px;"></div>
<span class="t" style="left:2064.0px;top:1209.9px;font-size:26.16px;color:#e4e4e4;transform:scaleX(1.0000);transform:scaleX(.8);">0.0</span>
<svg style="left:2140px;top:1208px" width="28" height="42"><path d="M8.5 12h11l-5.5 -6zM8.5 30h11l-5.5 6z" fill="#ddd"/><rect x="0" y="20" width="28" height="4" fill="#a8a8a8"/></svg>
<span class="t" style="left:1513.0px;top:1263.5px;font-size:25.44px;color:#d6d6d6;transform:scaleX(0.8841);">Y</span>
<svg style="left:1534px;top:1274px" width="11" height="6"><path d="M0 0H11L5.5 6Z" fill="#ddd"/></svg>
<div class="sl" style="left:1582px;top:1256px;width:476px;height:44px;"></div>
<div class="gr" style="left:1606px;top:1274px;width:432px;height:8px;"></div>
<div class="th" style="left:1796px;top:1256px;width:46px;height:42px;"></div>
<div class="vb" style="left:2058px;top:1256px;width:112px;height:44px;"></div>
<span class="t" style="left:2064.0px;top:1257.9px;font-size:26.16px;color:#e4e4e4;transform:scaleX(1.0000);transform:scaleX(.8);">0.0</span>
<svg style="left:2140px;top:1256px" width="28" height="42"><path d="M8.5 12h11l-5.5 -6zM8.5 30h11l-5.5 6z" fill="#ddd"/><rect x="0" y="20" width="28" height="4" fill="#a8a8a8"/></svg>
<span class="t" style="left:1513.0px;top:1311.5px;font-size:25.44px;color:#d6d6d6;transform:scaleX(0.9654);">Z</span>
<svg style="left:1534px;top:1322px" width="11" height="6"><path d="M0 0H11L5.5 6Z" fill="#ddd"/></svg>
<div class="sl" style="left:1582px;top:1304px;width:476px;height:44px;"></div>
<div class="gr" style="left:1606px;top:1322px;width:432px;height:8px;"></div>
<div class="th" style="left:1796px;top:1304px;width:46px;height:42px;"></div>
<div class="vb" style="left:2058px;top:1304px;width:112px;height:44px;"></div>
<span class="t" style="left:2064.0px;top:1305.9px;font-size:26.16px;color:#e4e4e4;transform:scaleX(1.0000);transform:scaleX(.8);">0.0</span>
<svg style="left:2140px;top:1304px" width="28" height="42"><path d="M8.5 12h11l-5.5 -6zM8.5 30h11l-5.5 6z" fill="#ddd"/><rect x="0" y="20" width="28" height="4" fill="#a8a8a8"/></svg>
<div class="btn" style="left:1992px;top:1354px;width:176px;height:42px;"></div>
<span class="t" style="left:2073.0px;top:1362.0px;font-size:25.44px;color:#d6d6d6;transform:scaleX(0.8277);">Reset</span>
<div class="hd" style="left:1498px;top:1412px;width:694px;height:36px;"></div>
<svg style="left:1512px;top:1418px" width="11" height="19"><path d="M0 0L11 9.5L0 19Z" fill="#a9e0bb"/></svg>
<span class="t" style="left:1532.0px;top:1416.7px;font-size:25.15px;color:#e0e0e0;transform:scaleX(0.8438);">Time and Beat shift</span>
<div class="hd" style="left:1498px;top:1448px;width:694px;height:36px;"></div>
<svg style="left:1508px;top:1458px" width="18" height="10"><path d="M0 0H18L9 10Z" fill="#a9e0bb"/></svg>
<span class="t" style="left:1532.0px;top:1452.7px;font-size:25.15px;color:#e0e0e0;transform:scaleX(0.8350);">Enable item if Channel value is in range</span>
<div style="left:1498px;top:1484px;width:694px;height:188px;border-left:2px solid #484848;border-right:2px solid #484848;border-bottom:2px solid #484848"></div>
<span class="t" style="left:1515.0px;top:1504.5px;font-size:25.44px;color:#e6e6e6;transform:scaleX(0.8232);">Channel</span>
<div class="btn" style="left:1676px;top:1496px;width:508px;height:44px;"></div>
<span class="t" style="left:1893.0px;top:1504.5px;font-size:25.44px;color:#d6d6d6;transform:scaleX(0.8665);">Not active</span>
<span class="t" style="left:1515.0px;top:1560.5px;font-size:25.44px;color:#d6d6d6;transform:scaleX(0.8125);">Max Value (%)</span>
<div class="sl" style="left:1678px;top:1552px;width:398px;height:46px;"></div>
<div class="gr" style="left:1702px;top:1570px;width:354px;height:8px;"></div>
<div class="th" style="left:2030px;top:1552px;width:46px;height:44px;"></div>
<div class="vb" style="left:2076px;top:1552px;width:108px;height:46px;"></div>
<span class="t" style="left:2082.0px;top:1553.9px;font-size:26.16px;color:#e4e4e4;transform:scaleX(1.0000);transform:scaleX(.8);">100</span>
<svg style="left:2154px;top:1552px" width="28" height="44"><path d="M8.5 13h11l-5.5 -6zM8.5 31h11l-5.5 6z" fill="#ddd"/><rect x="0" y="21" width="28" height="4" fill="#a8a8a8"/></svg>
<span class="t" style="left:1515.0px;top:1616.5px;font-size:25.44px;color:#d6d6d6;transform:scaleX(0.8109);">Min Value (%)</span>
<div class="sl" style="left:1678px;top:1608px;width:398px;height:46px;"></div>
<div class="gr" style="left:1702px;top:1626px;width:354px;height:8px;"></div>
<div class="th" style="left:1854px;top:1608px;width:46px;height:44px;"></div>
<div class="vb" style="left:2076px;top:1608px;width:108px;height:46px;"></div>
<span class="t" style="left:2082.0px;top:1609.9px;font-size:26.16px;color:#e4e4e4;transform:scaleX(1.0000);transform:scaleX(.8);">50</span>
<svg style="left:2154px;top:1608px" width="28" height="44"><path d="M8.5 13h11l-5.5 -6zM8.5 31h11l-5.5 6z" fill="#ddd"/><rect x="0" y="21" width="28" height="4" fill="#a8a8a8"/></svg>
<div class="hd" style="left:1498px;top:1678px;width:694px;height:36px;"></div>
<svg style="left:1512px;top:1684px" width="11" height="19"><path d="M0 0L11 9.5L0 19Z" fill="#a9e0bb"/></svg>
<span class="t" style="left:1532.0px;top:1682.7px;font-size:25.15px;color:#e0e0e0;transform:scaleX(0.8626);">Enable/Disable sequence</span>
<div class="hd" style="left:1498px;top:1714px;width:694px;height:36px;"></div>
<svg style="left:1512px;top:1720px" width="11" height="19"><path d="M0 0L11 9.5L0 19Z" fill="#a9e0bb"/></svg>
<span class="t" style="left:1532.0px;top:1718.7px;font-size:25.15px;color:#e0e0e0;transform:scaleX(0.8366);">Kinect - Position</span>
<div class="hd" style="left:1498px;top:1750px;width:694px;height:36px;"></div>
<svg style="left:1508px;top:1760px" width="18" height="10"><path d="M0 0H18L9 10Z" fill="#a9e0bb"/></svg>
<span class="t" style="left:1530.0px;top:1756.8px;font-size:22.67px;color:#e4e4e4;transform:scaleX(0.9581);">Time shifting effect cloning</span>
<div style="left:1498px;top:1786px;width:694px;height:58px;border-left:2px solid #484848;border-right:2px solid #484848"></div>
<span class="t" style="left:1515.0px;top:1806.5px;font-size:25.44px;color:#d6d6d6;transform:scaleX(0.8083);">Clones</span>
<div class="sl" style="left:1678px;top:1800px;width:396px;height:44px;"></div>
<div class="gr" style="left:1702px;top:1818px;width:352px;height:8px;"></div>
<div class="th" style="left:1678px;top:1800px;width:46px;height:42px;"></div>
<div class="vb" style="left:2074px;top:1800px;width:96px;height:44px;"></div>
<span class="t" style="left:2080.0px;top:1801.9px;font-size:26.16px;color:#e4e4e4;transform:scaleX(1.0000);transform:scaleX(.8);">0</span>
<svg style="left:2140px;top:1800px" width="28" height="42"><path d="M8.5 12h11l-5.5 -6zM8.5 30h11l-5.5 6z" fill="#ddd"/><rect x="0" y="20" width="28" height="4" fill="#a8a8a8"/></svg>
<div style="left:1490px;top:1844px;width:730px;height:2px;background:#464646"></div>
<svg width="0" height="0" style="left:0;top:0"><defs><linearGradient id="gOr" x1="0" y1="0" x2="0" y2="1"><stop offset="0" stop-color="#ffc878"/><stop offset=".3" stop-color="#ff9a28"/><stop offset=".55" stop-color="#ff6400"/><stop offset=".8" stop-color="#ff9808"/><stop offset="1" stop-color="#ffd828"/></linearGradient><linearGradient id="gGn" x1="0" y1="0" x2="0" y2="1"><stop offset="0" stop-color="#a8e828"/><stop offset="1" stop-color="#6cc008"/></linearGradient><linearGradient id="gGd" x1="0" y1="0" x2="0" y2="1"><stop offset="0" stop-color="#6a9a14"/><stop offset="1" stop-color="#4f7a0c"/></linearGradient><linearGradient id="gFo" x1="0" y1="0" x2="1" y2="1"><stop offset="0" stop-color="#ffe85a"/><stop offset="1" stop-color="#ffc400"/></linearGradient><linearGradient id="gFl" x1="0" y1="0" x2="0" y2="1"><stop offset="0" stop-color="#4a90f0"/><stop offset="1" stop-color="#0858d8"/></linearGradient><linearGradient id="gTr" x1="0" y1="0" x2="0" y2="1"><stop offset="0" stop-color="#ffd040"/><stop offset="1" stop-color="#f08c00"/></linearGradient><linearGradient id="gRd" x1="0" y1="0" x2="0" y2="1"><stop offset="0" stop-color="#ff5a30"/><stop offset="1" stop-color="#c80808"/></linearGradient><linearGradient id="gSq" x1="0" y1="0" x2="0" y2="1"><stop offset="0" stop-color="#38e858"/><stop offset="1" stop-color="#10a830"/></linearGradient><linearGradient id="gCl" x1="0" y1="0" x2="0" y2="1"><stop offset="0" stop-color="#ffffff"/><stop offset="1" stop-color="#c4d0e4"/></linearGradient><linearGradient id="gWv" x1="0" y1="0" x2="0" y2="1"><stop offset="0" stop-color="#18d828"/><stop offset="1" stop-color="#0a6a14" stop-opacity=".35"/></linearGradient><linearGradient id="gCm" x1="0" y1="0" x2="0" y2="1"><stop offset="0" stop-color="#e8e8ee"/><stop offset="1" stop-color="#b8b8c4"/></linearGradient><g id="wave"><g fill="#12d428"><rect x="8" y="11.8" width="2.2" height="5" rx="1"/><rect x="11.5" y="8" width="2.6" height="9" rx="1"/><rect x="16" y="4" width="4" height="13" rx="1.4"/><rect x="22" y="6.5" width="2.8" height="10.5" rx="1"/><rect x="25.6" y="6" width="2.5" height="11" rx="1"/><rect x="29" y="11.5" width="3.5" height="5.5" rx="1"/><rect x="25.6" y="12.5" width="6" height="4.5" rx="1.5"/></g><g fill="#3cf050" opacity=".55"><rect x="16.8" y="9" width="2.4" height="7"/><rect x="26" y="12" width="5" height="4"/><rect x="11.8" y="12" width="2" height="4"/></g><g fill="url(#gWv)"><rect x="8" y="18" width="2" height="3.5"/><rect x="12.5" y="18" width="2" height="9"/><rect x="17" y="18" width="2.5" height="14"/><rect x="21" y="18" width="2.5" height="14"/><rect x="25" y="18" width="2.5" height="12"/><rect x="29" y="18" width="2" height="8"/><rect x="32.5" y="18" width="1.6" height="4"/><rect x="9" y="18" width="24" height="2.5"/></g><rect x="4" y="16" width="31.5" height="2" fill="#021802"/></g><g id="sigma"><path d="M3 3H19V9H15V7H9.5L14 13L9.5 19H15V17H19V23H3V19.5L8 13L3 6.5Z" fill="#1fe01f" stroke="#000" stroke-width="2.4" stroke-linejoin="round"/><path d="M4.5 4.5L8 4.5L11 9Z" fill="#c8e830"/></g><g id="listic"><rect x="0" y="9" width="25" height="22" fill="#f4f4f4"/><rect x="0" y="29" width="25" height="2" fill="#c8c8c8"/><circle cx="3.5" cy="17" r="1.7" fill="#18a030"/><circle cx="3.5" cy="21.5" r="1.7" fill="#d04050"/><circle cx="3.5" cy="26" r="1.7" fill="#3080e0"/><g fill="#b0b0b0"><rect x="7" y="16" width="8" height="2"/><rect x="7" y="20.5" width="15" height="2"/><rect x="7" y="25" width="13" height="2"/></g><path d="M6 7L12 1L29 0L31 5L27 9L22 9L17 16L14 12L10 13Z" fill="#f0a040" stroke="#b86818" stroke-width="1"/><path d="M9 8L13 3L27 2L28 5L25 7L20 7L16 12Z" fill="#ffd8a0" opacity=".55"/></g></defs></svg>
<svg style="left:10px;top:7px" width="42" height="40"><g fill="none" stroke-width="4"><ellipse cx="19" cy="15" rx="11" ry="7.3" transform="rotate(-22 19 15)" stroke="#3a1c00" stroke-width="6.5"/><ellipse cx="26" cy="25" rx="10.5" ry="7.6" transform="rotate(38 26 25)" stroke="#3a1c00" stroke-width="6.5"/><ellipse cx="19" cy="15" rx="11" ry="7.3" transform="rotate(-22 19 15)" stroke="#e8a030"/><ellipse cx="26" cy="25" rx="10.5" ry="7.6" transform="rotate(38 26 25)" stroke="#d08820"/><path d="M8.5 17A11 7.3 -22 0 0 20 22" stroke="#ffd060"/></g></svg>
<svg style="left:38px;top:112px" width="26" height="32"><path d="M0 0H16L26 10V32H0Z" fill="#fff"/><path d="M16 0V10H26Z" fill="#d0d0d0"/><path d="M16 10H26" stroke="#aaa" stroke-width="1.5"/></svg>
<svg style="left:102px;top:116px" width="30" height="24"><path d="M1 3Q1 1 3 1H10L13 4H23V8H1Z" fill="#f0b400"/><path d="M1 6H23V24H1Z" fill="#ffc800"/><path d="M6 10H30L24 24H1Z" fill="url(#gFo)" stroke="#d89c00" stroke-width="1"/></svg>
<svg style="left:166px;top:114px" width="28" height="30"><rect width="28" height="30" rx="2" fill="url(#gFl)"/><rect x="3" y="2" width="22" height="13" fill="#fafafa"/><rect x="3" y="2" width="22" height="4" fill="#d8dce6"/><rect x="8" y="18" width="14" height="10" fill="#e4e4ea"/><rect x="16" y="20" width="3.5" height="6" fill="#1860d0"/></svg>
<svg style="left:243px;top:116px" width="32" height="28"><ellipse cx="15" cy="26.5" rx="11" ry="1" fill="#707070"/><g fill="url(#gCl)"><circle cx="8" cy="15.5" r="6.5"/><circle cx="16" cy="10" r="8"/><circle cx="23.5" cy="14.5" r="6"/><rect x="4" y="13" width="24" height="9" rx="4.5"/></g><circle cx="23.5" cy="18.5" r="4.8" fill="#159a32"/><path d="M21 18.5L24 15.8V17.4H26.5V19.6H24V21.2Z" fill="#c8f8c8" opacity=".55"/></svg>
<svg style="left:310px;top:112px" width="32" height="32"><use href="#listic"/></svg>
<svg style="left:594px;top:1333px" width="32" height="32"><use href="#listic"/></svg>
<svg style="left:380px;top:116px" width="31" height="31"><g fill="none" stroke="#c4ced0" stroke-width="2.4"><rect x="1.5" y="1.5" width="28" height="28"/><path d="M15.5 1.5V29.5M1.5 15.5H29.5"/></g></svg>
<svg style="left:450px;top:111px" width="34" height="34"><circle cx="17" cy="17" r="15.3" fill="#12b8f2"/><ellipse cx="25.2" cy="17" rx="4.6" ry="2.1" fill="#0c2a36" transform="rotate(0 17 17)"/><path d="M17 3.5L15.2 -0.5H18.8Z M10.8 1.2L12.6 4.6L9 4Z M23.2 1.2L21.4 4.6L25 4Z" fill="#2d2d2d" transform="rotate(0 17 17)"/><ellipse cx="25.2" cy="17" rx="4.6" ry="2.1" fill="#0c2a36" transform="rotate(60 17 17)"/><path d="M17 3.5L15.2 -0.5H18.8Z M10.8 1.2L12.6 4.6L9 4Z M23.2 1.2L21.4 4.6L25 4Z" fill="#2d2d2d" transform="rotate(60 17 17)"/><ellipse cx="25.2" cy="17" rx="4.6" ry="2.1" fill="#0c2a36" transform="rotate(120 17 17)"/><path d="M17 3.5L15.2 -0.5H18.8Z M10.8 1.2L12.6 4.6L9 4Z M23.2 1.2L21.4 4.6L25 4Z" fill="#2d2d2d" transform="rotate(120 17 17)"/><ellipse cx="25.2" cy="17" rx="4.6" ry="2.1" fill="#0c2a36" transform="rotate(180 17 17)"/><path d="M17 3.5L15.2 -0.5H18.8Z M10.8 1.2L12.6 4.6L9 4Z M23.2 1.2L21.4 4.6L25 4Z" fill="#2d2d2d" transform="rotate(180 17 17)"/><ellipse cx="25.2" cy="17" rx="4.6" ry="2.1" fill="#0c2a36" transform="rotate(240 17 17)"/><path d="M17 3.5L15.2 -0.5H18.8Z M10.8 1.2L12.6 4.6L9 4Z M23.2 1.2L21.4 4.6L25 4Z" fill="#2d2d2d" transform="rotate(240 17 17)"/><ellipse cx="25.2" cy="17" rx="4.6" ry="2.1" fill="#0c2a36" transform="rotate(300 17 17)"/><path d="M17 3.5L15.2 -0.5H18.8Z M10.8 1.2L12.6 4.6L9 4Z M23.2 1.2L21.4 4.6L25 4Z" fill="#2d2d2d" transform="rotate(300 17 17)"/><circle cx="17" cy="17" r="4.2" fill="#7fe0ff"/><circle cx="17" cy="17" r="2.8" fill="#f2fdff"/></svg>
<svg style="left:545px;top:120px" width="12" height="18"><path d="M0 0L12 9L0 18Z" fill="#22c838"/></svg>
<svg style="left:602px;top:118px" width="16" height="16"><rect width="16" height="16" rx="1" fill="url(#gSq)"/></svg>
<svg style="left:678px;top:110px" width="32" height="36"><g transform="rotate(38 16 18)"><path d="M8 4L16 -3L24 4V33H8Z" fill="#ffcc08" stroke="#d89000" stroke-width="1.5"/><path d="M9 5L16 -1.5L23 5V14H9Z" fill="#ffe050" opacity=".6"/><circle cx="16" cy="3" r="1.6" fill="#7a4a00"/><g fill="none" stroke="#fff6d8" stroke-width="1.7"><path d="M12.5 27.5A4.5 4.5 0 0 1 19.5 27.5"/><path d="M10.5 24.8A7.5 7.5 0 0 1 21.5 24.8" opacity=".9"/><path d="M10 21.5A9 9 0 0 1 22 21.5" opacity=".6"/></g><circle cx="16" cy="29.8" r="1.5" fill="#fff6d8"/></g></svg>
<svg style="left:755px;top:116px" width="32" height="24"><rect x="3" y="2" width="28" height="20.5" rx="1.5" fill="url(#gCm)"/><rect x="6" y="0" width="6" height="3" fill="#e8e8ee"/><rect x="1" y="4.5" width="8" height="14.5" fill="#1a1a1a"/><rect x="3" y="6" width="4" height="11.5" fill="#4a4a4a"/><circle cx="21.5" cy="12" r="7" fill="#c8c8d2" stroke="#f2f2f6" stroke-width="1.3"/><circle cx="21.5" cy="12" r="4.2" fill="#3a68d8"/><path d="M19 10L21 12L23 9.5L22 8Z" fill="#0c1c50"/></svg>
<svg style="left:1813px;top:111px" width="35" height="32"><path d="M17.5 1L34 30.5H1Z" fill="url(#gTr)" stroke="#ffb020" stroke-width="1" stroke-linejoin="round"/><g stroke="#111" stroke-width="2.4"><path d="M17 11V27M10.5 15L23.5 23M23.5 15L10.5 23"/></g></svg>
<svg style="left:2128px;top:112px" width="32" height="32"><rect x="1" y="1" width="21" height="13" fill="#20d830"/><rect x="1" y="1" width="21" height="3" fill="#60f070"/><rect x="11" y="7" width="18" height="17" fill="#4a78d8"/><rect x="11" y="7" width="18" height="3" fill="#80a4f0"/><rect x="5" y="17" width="20" height="13.5" fill="#e8c860"/><rect x="5" y="17" width="20" height="3" fill="#fff0a0"/></svg>
<svg style="left:2180px;top:111px" width="30" height="30"><circle cx="15" cy="15" r="14" fill="url(#gRd)"/><ellipse cx="15" cy="8" rx="9" ry="5" fill="#ff8a70" opacity=".45"/><rect x="7" y="12.5" width="16" height="5" rx="1" fill="#fff"/></svg>
<svg style="left:33px;top:1333px" width="32" height="32"><path d="M3 8L22 3L29 26L10 31Z" fill="#f0f0c8"/><path d="M6 9L25 5L30 25L11 31Z" fill="#b4dcf8"/><path d="M26 1L30 4L14 24L10 21Z" fill="#18a050"/><path d="M22 4L24 2L29 6L27 8Z" fill="#e8f8e8"/><path d="M10 21L14 24L8 27Z" fill="#f08030"/></svg>
<svg style="left:255px;top:1334px" width="32" height="32"><path d="M12 0H20V12H32V20H20V32H12V20H0V12H12Z" fill="url(#gOr)"/><circle cx="16" cy="17" r="5" fill="#ff5a00" opacity=".6"/></svg>
<svg style="left:2140px;top:940px" width="32" height="32"><path d="M12 0H20V12H32V20H20V32H12V20H0V12H12Z" fill="url(#gOr)"/><circle cx="16" cy="17" r="5" fill="#ff5a00" opacity=".6"/></svg>
<svg style="left:2140px;top:984px" width="32" height="32"><path d="M0.5 3.5L4.5 0.5L28 26.5L25.5 29Z" fill="#8a1616"/><path d="M29 0.5L31 2C22 8 11 18 6.5 29L2 27C6 17 18 7 29 .5Z" fill="#8c1515"/><ellipse cx="3.5" cy="3" rx="2.6" ry="1.8" fill="#c87070" opacity=".7" transform="rotate(45 3.5 3)"/><ellipse cx="4" cy="27.5" rx="1.8" ry="1.2" fill="#c87070" opacity=".5"/></svg>
<svg style="left:329px;top:1334px" width="30" height="31"><path d="M8 0H22V15H30L15 31L0 15H8Z" fill="url(#gGn)"/><path d="M10 2H20V5H10Z" fill="#d8ff80" opacity=".5"/></svg>
<svg style="left:391px;top:1334px" width="30" height="31"><g transform="rotate(180 15 15.5)"><path d="M8 0H22V15H30L15 31L0 15H8Z" fill="url(#gGd)"/><path d="M10 2H20V5H10Z" fill="#d8ff80" opacity="0"/></g></svg>
<svg style="left:455px;top:1334px" width="31" height="30"><g transform="rotate(-90 15 15) translate(0 0)"><path d="M8 0H22V15H30L15 31L0 15H8Z" fill="url(#gGn)"/><path d="M10 2H20V5H10Z" fill="#d8ff80" opacity=".5"/></g></svg>
<svg style="left:519px;top:1334px" width="31" height="30"><g transform="rotate(90 15.5 15) translate(.5 -.5)"><path d="M8 0H22V15H30L15 31L0 15H8Z" fill="url(#gGn)"/><path d="M10 2H20V5H10Z" fill="#d8ff80" opacity=".5"/></g></svg>
<svg style="left:2136px;top:272px" width="42" height="40"><use href="#wave"/></svg>
<svg style="left:2136px;top:324px" width="42" height="40"><use href="#wave"/></svg>
<svg style="left:2136px;top:376px" width="42" height="40"><use href="#wave"/></svg>
<svg style="left:2136px;top:428px" width="42" height="40"><use href="#wave"/></svg>
<svg style="left:2136px;top:480px" width="42" height="40"><use href="#wave"/></svg>
<svg style="left:2136px;top:532px" width="42" height="40"><use href="#wave"/></svg>
<svg style="left:2136px;top:584px" width="42" height="40"><use href="#wave"/></svg>
<svg style="left:2136px;top:636px" width="42" height="40"><use href="#wave"/></svg>
<svg style="left:2136px;top:688px" width="42" height="40"><use href="#wave"/></svg>
<svg style="left:2136px;top:740px" width="42" height="40"><use href="#wave"/></svg>
<svg style="left:2136px;top:790px" width="42" height="40"><use href="#wave"/></svg>
<svg style="left:2136px;top:840px" width="42" height="40"><use href="#wave"/></svg>
<svg style="left:1690px;top:1498px" width="42" height="40"><use href="#wave"/></svg>
<svg style="left:1622px;top:174px" width="22" height="26"><use href="#sigma"/></svg>
<svg style="left:1451px;top:1388px" width="22" height="26"><use href="#sigma"/></svg>
<svg style="left:2032px;top:1358px" width="32" height="32"><circle cx="16" cy="16" r="15.5" fill="url(#gRd)"/><ellipse cx="16" cy="8" rx="10" ry="5" fill="#ff9070" opacity=".4"/><path d="M9 9L23 23M23 9L9 23" stroke="#fff" stroke-width="5"/></svg>
<svg style="left:34px;top:1390px" width="56" height="56"><g fill="#d8102c"><circle cx="19" cy="15" r="1.8"/><circle cx="35" cy="15" r="1.8"/><circle cx="19" cy="43" r="1.8"/><circle cx="35" cy="43" r="1.8"/></g><g fill="#ffd428"><rect x="9" y="28" width="6" height="2.6" rx="1"/><rect x="39" y="28" width="6" height="2.6" rx="1"/></g></svg>
<svg style="left:34px;top:1462px" width="56" height="56"><g transform="rotate(0 28 28)"><ellipse cx="28" cy="12.5" rx="6" ry="8.5" fill="none" stroke="#1838e8" stroke-width="2.2"/><path d="M23.5 7A6 8.5 0 0 1 32.5 7" fill="none" stroke="#28d8f8" stroke-width="2.2"/><path d="M25 19.5A6 8.5 0 0 0 31 19.5" fill="none" stroke="#28c8f8" stroke-width="2"/></g><g transform="rotate(60 28 28)"><ellipse cx="28" cy="12.5" rx="6" ry="8.5" fill="none" stroke="#1838e8" stroke-width="2.2"/><path d="M23.5 7A6 8.5 0 0 1 32.5 7" fill="none" stroke="#28d8f8" stroke-width="2.2"/><path d="M25 19.5A6 8.5 0 0 0 31 19.5" fill="none" stroke="#28c8f8" stroke-width="2"/></g><g transform="rotate(120 28 28)"><ellipse cx="28" cy="12.5" rx="6" ry="8.5" fill="none" stroke="#1838e8" stroke-width="2.2"/><path d="M23.5 7A6 8.5 0 0 1 32.5 7" fill="none" stroke="#28d8f8" stroke-width="2.2"/><path d="M25 19.5A6 8.5 0 0 0 31 19.5" fill="none" stroke="#28c8f8" stroke-width="2"/></g><g transform="rotate(180 28 28)"><ellipse cx="28" cy="12.5" rx="6" ry="8.5" fill="none" stroke="#1838e8" stroke-width="2.2"/><path d="M23.5 7A6 8.5 0 0 1 32.5 7" fill="none" stroke="#28d8f8" stroke-width="2.2"/><path d="M25 19.5A6 8.5 0 0 0 31 19.5" fill="none" stroke="#28c8f8" stroke-width="2"/></g><g transform="rotate(240 28 28)"><ellipse cx="28" cy="12.5" rx="6" ry="8.5" fill="none" stroke="#1838e8" stroke-width="2.2"/><path d="M23.5 7A6 8.5 0 0 1 32.5 7" fill="none" stroke="#28d8f8" stroke-width="2.2"/><path d="M25 19.5A6 8.5 0 0 0 31 19.5" fill="none" stroke="#28c8f8" stroke-width="2"/></g><g transform="rotate(300 28 28)"><ellipse cx="28" cy="12.5" rx="6" ry="8.5" fill="none" stroke="#1838e8" stroke-width="2.2"/><path d="M23.5 7A6 8.5 0 0 1 32.5 7" fill="none" stroke="#28d8f8" stroke-width="2.2"/><path d="M25 19.5A6 8.5 0 0 0 31 19.5" fill="none" stroke="#28c8f8" stroke-width="2"/></g></svg>
</body></html>
